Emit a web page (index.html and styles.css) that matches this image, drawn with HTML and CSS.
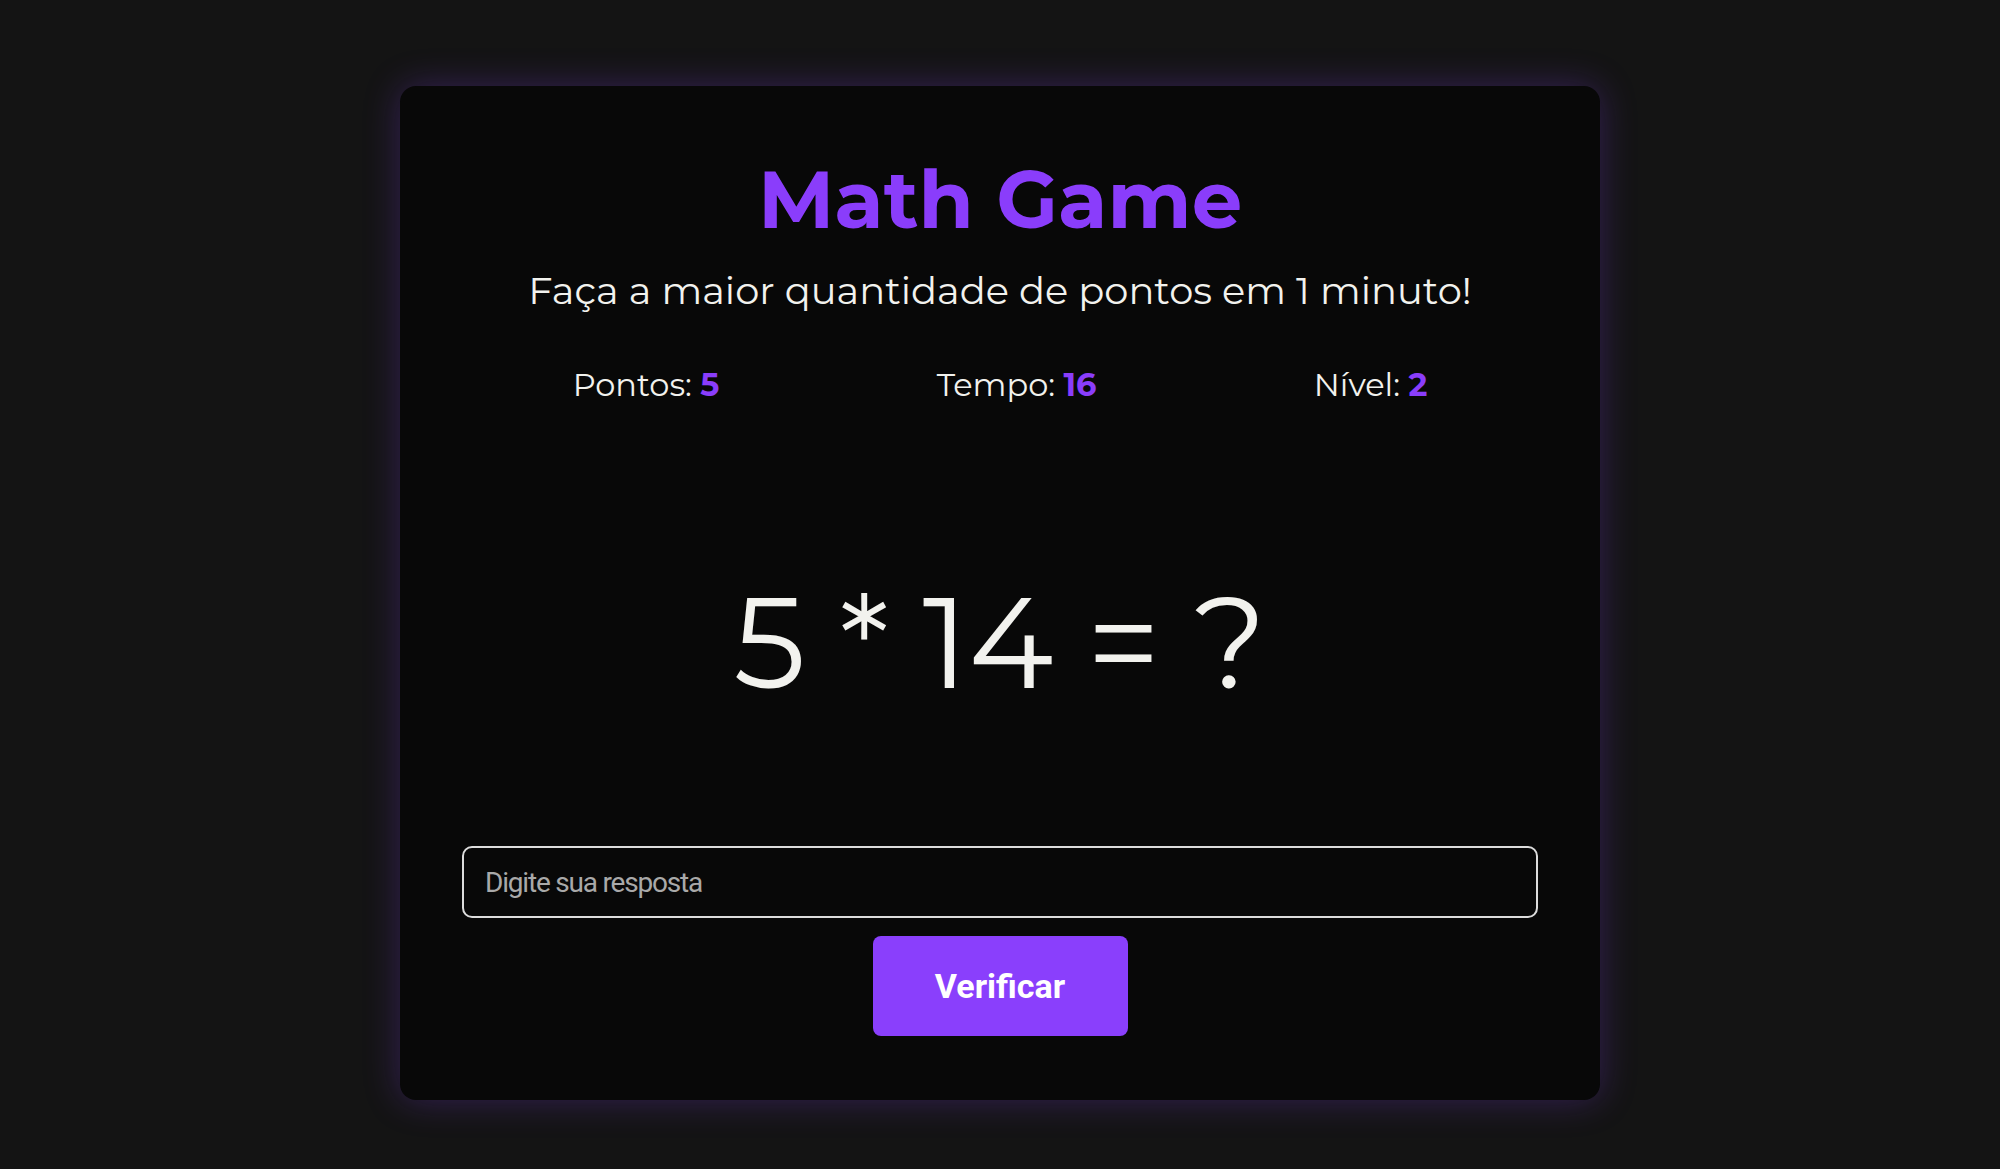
FILE: index.html
```html
<!DOCTYPE html>
<html lang="pt-BR">
<head>
<meta charset="UTF-8">
<title>Math Game</title>
<link rel="stylesheet" href="styles.css">
</head>
<body>
<main class="game">
  <h1 class="title">Math Game</h1>
  <p class="subtitle">Faça a maior quantidade de pontos em 1 minuto!</p>
  <div class="stats">
    <span class="stat">Pontos: <strong class="stat-value">5</strong></span>
    <span class="stat">Tempo: <strong class="stat-value">16</strong></span>
    <span class="stat">Nível: <strong class="stat-value">2</strong></span>
  </div>
  <div class="question">5 * 14 = ?</div>
  <form class="answer">
    <input class="answer-input" type="text" placeholder="Digite sua resposta">
    <button class="answer-button" type="button">Verificar</button>
  </form>
</main>
</body>
</html>
```

FILE: styles.css
```css
* {
  box-sizing: border-box;
}

html,
body {
  margin: 0;
  padding: 0;
}

body {
  min-height: 100vh;
  background: #141414;
  font-family: "Montserrat", "Open Sans", "Noto Sans", sans-serif;
  color: #f2f2ee;
  padding-top: 86px;
}

.game {
  width: 1200px;
  margin: 0 auto;
  padding: 64px 62px 64px;
  background: #080808;
  border-radius: 16px;
  box-shadow: 0 0 36px rgba(138, 63, 252, 0.28);
  display: flex;
  flex-direction: column;
  align-items: center;
  text-align: center;
}

.title {
  margin: 0;
  font-size: 80px;
  line-height: 100px;
  font-weight: 700;
  color: #8a3dfb;
}

.subtitle {
  margin: 17px 0 0;
  font-size: 38.4px;
  line-height: 48px;
  font-weight: 400;
}

.stats {
  margin-top: 50px;
  width: 100%;
  padding: 0 2px;
  display: flex;
  justify-content: space-around;
  font-size: 32px;
  line-height: 40px;
}

.stat-value {
  color: #8a3dfb;
  font-weight: 700;
}

.question {
  margin-top: 162px;
  font-size: 128px;
  line-height: 150px;
  font-weight: 400;
}

.answer {
  margin-top: 129px;
  width: 100%;
  display: flex;
  flex-direction: column;
  align-items: center;
  gap: 18px;
}

.answer-input {
  width: 100%;
  height: 72px;
  padding: 0 21px;
  border: 2px solid #dcdcdc;
  border-radius: 10px;
  background: #080808;
  color: #f2f2f2;
  font-family: "Roboto", "Liberation Sans", sans-serif;
  font-size: 28px;
  letter-spacing: -1.2px;
  outline: none;
}

.answer-input::placeholder {
  color: #a9a9a9;
}

.answer-button {
  width: 255px;
  height: 100px;
  border: none;
  border-radius: 8px;
  background: #8a3ffc;
  color: #ffffff;
  font-family: "Roboto", "Liberation Sans", sans-serif;
  font-size: 34px;
  font-weight: 700;
  cursor: pointer;
}
```
